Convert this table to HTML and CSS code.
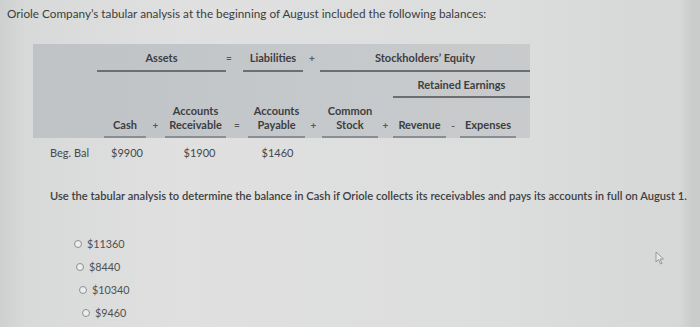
FILE: index.html
```html
<!DOCTYPE html>
<html>
<head>
<meta charset="utf-8">
<link rel="stylesheet" href="styles.css">
</head>
<body>
<div class="page">
  <p class="title">Oriole Company’s tabular analysis at the beginning of August included the following balances:</p>

  <div class="tbox">
    <div class="h1 assets">Assets</div>
    <div class="op eq1">=</div>
    <div class="h1 liab">Liabilities</div>
    <div class="op plus1">+</div>
    <div class="h1 se">Stockholders’ Equity</div>

    <div class="h1 re">Retained Earnings</div>

    <div class="ch c-cash">Cash</div>
    <div class="op o1">+</div>
    <div class="ch c-ar">Accounts<br>Receivable</div>
    <div class="op o2">=</div>
    <div class="ch c-ap">Accounts<br>Payable</div>
    <div class="op o3">+</div>
    <div class="ch c-cs">Common<br>Stock</div>
    <div class="op o4">+</div>
    <div class="ch c-rev">Revenue</div>
    <div class="op o5">-</div>
    <div class="ch c-exp">Expenses</div>
  </div>

  <div class="drow">
    <div class="lbl">Beg. Bal</div>
    <div class="v v-cash">$9900</div>
    <div class="v v-ar">$1900</div>
    <div class="v v-ap">$1460</div>
  </div>

  <p class="question">Use the tabular analysis to determine the balance in Cash if Oriole collects its receivables and pays its accounts in full on August 1.</p>

  <ul class="opts">
    <li class="opt a"><span class="radio"></span>$11360</li>
    <li class="opt b"><span class="radio"></span>$8440</li>
    <li class="opt c"><span class="radio"></span>$10340</li>
    <li class="opt d"><span class="radio"></span>$9460</li>
  </ul>

  <svg class="cursor" width="10" height="14" viewBox="0 0 10 14"><path d="M1 1 L1 11 L3.5 8.5 L5.5 13 L7 12.3 L5 8 L8.5 8 Z" fill="#e8e8e8" stroke="#888" stroke-width="0.8"/></svg>
</div>
</body>
</html>
```

FILE: styles.css
```css
html, body {
  margin: 0;
  padding: 0;
}
body {
  width: 700px;
  height: 327px;
  overflow: hidden;
  font-family: Lato, "Open Sans", sans-serif;
  color: #3a3c3e;
  background: linear-gradient(90deg, #cdd0cf 0px, #d8dad9 26px, #dfe0df 180px, #dcdedd 500px, #d6d8d7 680px, #c9cccb 692px, #c9cccb 700px);
}
.page {
  position: relative;
  height: 327px;
  padding: 6px 0 0 0;
  box-sizing: border-box;
}
.title {
  margin: 0 0 0 7px;
  font-size: 11.75px;
  line-height: 16px;
  color: #3b3d40;
}
.tbox {
  margin: 22px 0 0 33px;
  width: 497px;
  height: 94px;
  background: linear-gradient(90deg, #c0c3c6, #c6c9cb 60%, #c8cacc);
  display: grid;
  grid-template-columns: 71px 42px 19px 61px 22px 57px 17px 56px 15px 53px 14px 56px 14px;
  grid-template-rows: 28px 26px 40px;
  font-size: 11px;
  font-weight: bold;
  color: #3c3e42;
}
.h1 {
  text-align: center;
  border-bottom: 2px solid #6b6e72;
  line-height: 28px;
  height: 26px;
}
.assets { grid-column: 2 / 5; grid-row: 1; margin-left: -7px; }
.liab { grid-column: 6 / 7; grid-row: 1; margin-left: -5px; margin-right: 2px; }
.se { grid-column: 8 / 14; grid-row: 1; margin-left: -2px; }
.re { grid-column: 10 / 14; grid-row: 2; height: 24px; line-height: 25px; }
.op {
  text-align: center;
  font-weight: bold;
  font-size: 10px;
  color: #55585c;
}
.eq1 { grid-column: 5; grid-row: 1; line-height: 28px; text-align: left; padding-left: 0; }
.plus1 { grid-column: 7; grid-row: 1; line-height: 28px; margin-left: 4px; text-align: left; }
.ch {
  grid-row: 3;
  align-self: end;
  text-align: center;
  line-height: 14px;
  padding-bottom: 4px;
  border-bottom: 2px solid #8a8d91;
}
.c-cash { grid-column: 2; }
.c-ar { grid-column: 4; }
.c-ap { grid-column: 6; }
.c-cs { grid-column: 8; }
.c-rev { grid-column: 10; }
.c-exp { grid-column: 12; }
.o1, .o2, .o3, .o4, .o5 { grid-row: 3; align-self: end; line-height: 14px; padding-bottom: 6px; }
.o1 { grid-column: 3; }
.o2 { grid-column: 5; }
.o3 { grid-column: 7; }
.o4 { grid-column: 9; }
.o5 { grid-column: 11; }

.drow {
  margin-left: 33px;
  display: grid;
  grid-template-columns: 71px 42px 19px 61px 22px 57px;
  height: 28px;
  align-items: center;
  font-size: 11px;
  color: #45484b;
}
.lbl { grid-column: 1; padding-left: 17px; }
.v { text-align: center; }
.v-cash { grid-column: 2; margin-left: 4px; }
.v-ar { grid-column: 4; margin-left: 8px; }
.v-ap { grid-column: 6; margin-left: 2px; }

.question {
  margin: 23px 0 0 50px;
  font-size: 11.15px;
  line-height: 14px;
  color: #3d4044;
  font-weight: 600;
}
.opts {
  list-style: none;
  margin: 29px 0 0 0;
  padding: 0;
}
.opt {
  display: flex;
  align-items: center;
  gap: 5px;
  height: 23px;
  font-size: 10.8px;
  color: #4e5154;
}
.opt.a { margin-left: 74px; }
.opt.b { margin-left: 76px; }
.opt.c { margin-left: 79px; }
.opt.d { margin-left: 82px; }
.radio {
  width: 6px;
  height: 6px;
  border: 1px solid #8c8f93;
  border-radius: 50%;
  background: #eceded;
}
.cursor {
  position: absolute;
  left: 655px;
  top: 251px;
}
```
